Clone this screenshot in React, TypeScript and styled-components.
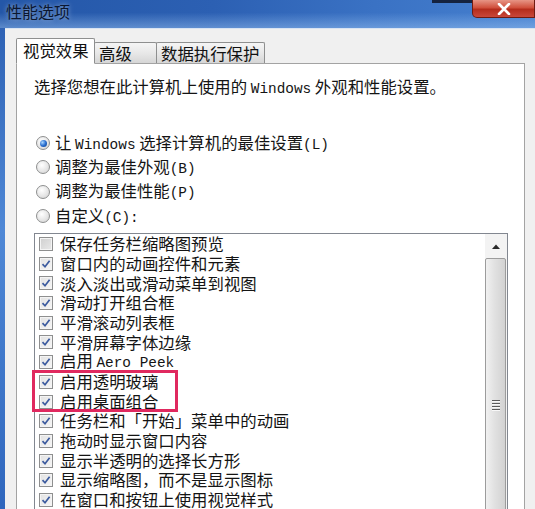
import React from "react";
import styled, { createGlobalStyle } from "styled-components";

const GlobalStyle = createGlobalStyle`
  html, body { margin: 0; padding: 0; overflow: hidden; background: #2f62b4; }
  body { font-family: "Noto Sans CJK SC", "Noto Sans", sans-serif; }
`;

const Window = styled.div`
  width: 535px;
  height: 509px;
  overflow: hidden;
  display: flex;
  flex-direction: column;
  background: linear-gradient(180deg, #2a5db0 0%, #4f88d6 45%, #2f66bd 100%);
`;

const TitleBar = styled.div`
  height: 28px;
  flex: none;
  display: flex;
  align-items: flex-start;
  background:
    linear-gradient(180deg, rgba(255,255,255,0) 45%, rgba(160,200,245,0.45) 100%),
    linear-gradient(90deg, #2457a8 0%, #2c60b3 40%, #3a72c4 70%, #4680cf 100%);
`;

const Title = styled.div`
  padding-left: 6px;
  font-size: 16px;
  line-height: 23.4px;
  color: #0b1730;
  text-shadow: 0 0 5px rgba(255, 255, 255, 0.55);
`;

const Caption = styled.div`
  margin-left: auto;
  display: flex;
  align-items: flex-start;
`;

const MaxEdge = styled.div`
  width: 40px;
  height: 3px;
  background: #15233f;
`;

const CloseButton = styled.div`
  width: 63px;
  height: 18px;
  box-sizing: border-box;
  border: 1px solid #6e1b12;
  border-top: none;
  border-radius: 0 0 0 5px;
  background: linear-gradient(180deg, #e79585 0%, #d0503c 45%, #b52d1c 55%, #c9473a 100%);
  display: flex;
  align-items: center;
  justify-content: center;
`;

const Body = styled.div`
  flex: 1;
  margin-left: 5px;
  background: #f0f0f0;
  border-top: 1px solid #d8e3f2;
  padding: 9px 10px 0 11px;
  display: flex;
  flex-direction: column;
  min-height: 0;
`;

const TabRow = styled.div`
  display: flex;
  align-items: flex-end;
  height: 25px;
  flex: none;
`;

const Tab = styled.div<{ $active?: boolean; $w: number; $pl: number }>`
  box-sizing: border-box;
  flex: none;
  width: ${(p) => p.$w}px;
  height: ${(p) => (p.$active ? 26 : 21)}px;
  margin-bottom: ${(p) => (p.$active ? -1 : 0)}px;
  margin-left: ${(p) => (p.$active ? 0 : -1)}px;
  padding-left: ${(p) => p.$pl}px;
  padding-top: ${(p) => (p.$active ? 1 : 0)}px;
  border: 1px solid #8e8f8f;
  border-bottom: ${(p) => (p.$active ? "1px solid #ffffff" : "none")};
  border-radius: 2px 2px 0 0;
  background: ${(p) =>
    p.$active ? "#ffffff" : "linear-gradient(180deg, #f5f5f5 0%, #e8e8e8 50%, #d6d6d6 100%)"};
  position: relative;
  z-index: ${(p) => (p.$active ? 2 : 1)};
  font-size: 16.4px;
  line-height: 20px;
  color: #111;
  white-space: nowrap;
  &:first-child { margin-left: 0; }
`;

const Panel = styled.div`
  flex: none;
  height: 480px;
  box-sizing: border-box;
  background: #ffffff;
  border: 1px solid #a3a3a3;
  padding: 12px 16px 0 17px;
  display: flex;
  flex-direction: column;
`;

const Text = styled.div`
  font-size: 16.4px;
  line-height: 20px;
  color: #141414;
  white-space: nowrap;
`;

const Latin = styled.span`
  font-family: "Liberation Mono", monospace;
  font-size: 14.4px;
`;

const RadioGroup = styled.div`
  margin-top: 32px;
  padding-left: 2px;
  display: flex;
  flex-direction: column;
`;

const RadioRow = styled.div`
  height: 24.3px;
  line-height: 24px;
  display: flex;
  align-items: center;
  gap: 5px;
  font-size: 16.4px;
  color: #141414;
  white-space: nowrap;
`;

const RadioCircle = styled.span<{ $on?: boolean }>`
  width: 14px;
  height: 14px;
  box-sizing: border-box;
  border-radius: 50%;
  border: 1px solid #8e8f8f;
  background: radial-gradient(circle at 40% 35%, #ffffff 0%, #e6e6e6 55%, #cfcfcf 100%);
  display: flex;
  align-items: center;
  justify-content: center;
  flex: none;
  &::after {
    content: "";
    display: ${(p) => (p.$on ? "block" : "none")};
    width: 7px;
    height: 7px;
    border-radius: 50%;
    background: radial-gradient(circle at 35% 35%, #a8d6ff 0%, #2a6fd0 50%, #0b3d8a 100%);
  }
`;

const ListBox = styled.div`
  margin-top: 5px;
  height: 320px;
  flex: none;
  box-sizing: border-box;
  border: 1px solid #828790;
  display: flex;
  position: relative;
`;

const Items = styled.div`
  flex: 1;
  padding-left: 4px;
  overflow: hidden;
  display: flex;
  flex-direction: column;
`;

const ItemRow = styled.div`
  height: 19.7px;
  line-height: 19.7px;
  flex: none;
  display: flex;
  align-items: center;
  gap: 7px;
  font-size: 16.4px;
  color: #141414;
  white-space: nowrap;
`;

const CheckBox = styled.span<{ $on?: boolean }>`
  width: 14px;
  height: 14px;
  box-sizing: border-box;
  border: 1px solid #8e8f8f;
  box-shadow: inset 0 0 0 1px #f4f4f4;
  background: ${(p) =>
    p.$on
      ? "linear-gradient(135deg, #e2e2e2 0%, #f6f6f6 100%)"
      : "linear-gradient(135deg, #cfcfcf 0%, #e9e9e9 100%)"};
  display: flex;
  align-items: center;
  justify-content: center;
  flex: none;
`;

const Highlight = styled.div`
  position: absolute;
  left: -3px;
  top: 136px;
  width: 146px;
  height: 42px;
  box-sizing: border-box;
  border: 3px solid #e0295f;
  pointer-events: none;
`;

const ScrollBar = styled.div`
  width: 22px;
  flex: none;
  display: flex;
  flex-direction: column;
  background: #f3f3f3;
`;

const UpButton = styled.div`
  height: 24px;
  flex: none;
  display: flex;
  align-items: center;
  justify-content: center;
`;

const Thumb = styled.div`
  flex: 1;
  margin: 0 1px 0 0;
  box-sizing: border-box;
  border: 1px solid #9c9c9c;
  border-radius: 2px;
  background: linear-gradient(90deg, #f1f1f1 0%, #e1e1e1 45%, #d2d2d2 100%);
  display: flex;
  flex-direction: column;
  align-items: center;
  justify-content: center;
  gap: 2px;
`;

const GripLine = styled.span`
  width: 8px;
  height: 1px;
  background: #5b5b5b;
  box-shadow: 0 1px 0 #f8f8f8;
`;

const Check = () => (
  <svg width="10" height="10" viewBox="0 0 10 10">
    <path d="M1.5 5.2 L4 7.8 L8.6 1.8" fill="none" stroke="#3b5a9e" strokeWidth="1.7" />
  </svg>
);

type Item = { label: React.ReactNode; on: boolean };

const items: Item[] = [
  { label: "保存任务栏缩略图预览", on: false },
  { label: "窗口内的动画控件和元素", on: true },
  { label: "淡入淡出或滑动菜单到视图", on: true },
  { label: "滑动打开组合框", on: true },
  { label: "平滑滚动列表框", on: true },
  { label: "平滑屏幕字体边缘", on: true },
  { label: <>启用 <Latin>Aero Peek</Latin></>, on: true },
  { label: "启用透明玻璃", on: true },
  { label: "启用桌面组合", on: true },
  { label: "任务栏和「开始」菜单中的动画", on: true },
  { label: "拖动时显示窗口内容", on: true },
  { label: "显示半透明的选择长方形", on: true },
  { label: "显示缩略图，而不是显示图标", on: true },
  { label: "在窗口和按钮上使用视觉样式", on: true },
];

const radios: { label: React.ReactNode; on?: boolean }[] = [
  { label: <>让 <Latin>Windows</Latin> 选择计算机的最佳设置<Latin>(L)</Latin></>, on: true },
  { label: <>调整为最佳外观<Latin>(B)</Latin></> },
  { label: <>调整为最佳性能<Latin>(P)</Latin></> },
  { label: <>自定义<Latin>(C):</Latin></> },
];

export default function App() {
  return (
    <>
      <GlobalStyle />
      <Window>
        <TitleBar>
          <Title>性能选项</Title>
          <Caption>
            <MaxEdge />
            <CloseButton>
              <svg width="14" height="12" viewBox="0 0 14 12">
                <path d="M2 1 L12 11 M12 1 L2 11" stroke="#ffffff" strokeWidth="2.6" strokeLinecap="round" />
              </svg>
            </CloseButton>
          </Caption>
        </TitleBar>
        <Body>
          <TabRow>
            <Tab $active $w={79} $pl={6}>视觉效果</Tab>
            <Tab $w={63} $pl={4}>高级</Tab>
            <Tab $w={109} $pl={4}>数据执行保护</Tab>
          </TabRow>
          <Panel>
            <Text>
              选择您想在此计算机上使用的 <Latin>Windows</Latin> 外观和性能设置。
            </Text>
            <RadioGroup>
              {radios.map((r, i) => (
                <RadioRow key={i}>
                  <RadioCircle $on={r.on} />
                  <span>{r.label}</span>
                </RadioRow>
              ))}
            </RadioGroup>
            <ListBox>
              <Items>
                {items.map((it, i) => (
                  <ItemRow key={i}>
                    <CheckBox $on={it.on}>{it.on && <Check />}</CheckBox>
                    <span>{it.label}</span>
                  </ItemRow>
                ))}
              </Items>
              <ScrollBar>
                <UpButton>
                  <svg width="8" height="5" viewBox="0 0 8 5">
                    <path d="M0 5 L4 0.5 L8 5 Z" fill="#2a2a2a" />
                  </svg>
                </UpButton>
                <Thumb>
                  <GripLine />
                  <GripLine />
                  <GripLine />
                  <GripLine />
                </Thumb>
              </ScrollBar>
              <Highlight />
            </ListBox>
          </Panel>
        </Body>
      </Window>
    </>
  );
}
